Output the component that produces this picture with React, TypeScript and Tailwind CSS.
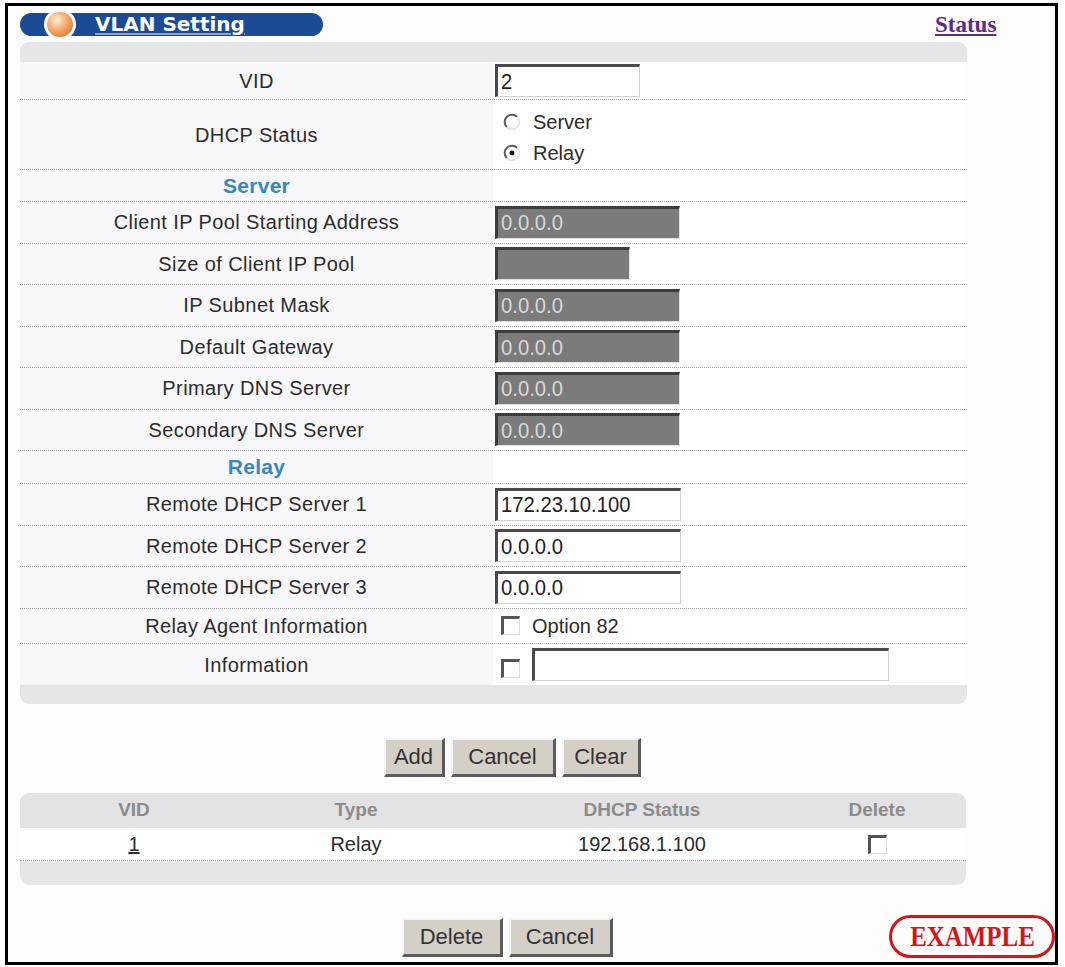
import type { ReactNode } from "react";

// Classic Windows-style form widgets for the VLAN / DHCP setting page

function TextBox({ value, width, disabled }: { value?: string; width: string; disabled?: boolean }) {
  return (
    <div
      className={`${width} h-[33px] flex items-center pl-[3px] overflow-hidden border-t-[3px] border-l-[3px] border-b border-r ${
        disabled
          ? "bg-[#7b7b7b] border-t-[#3c3c3c] border-l-[#3c3c3c] border-b-[#e2e2e2] border-r-[#e2e2e2] text-[#d8d8d8]"
          : "bg-white border-t-[#4a4a4a] border-l-[#4a4a4a] border-b-[#d0d0d0] border-r-[#d0d0d0] text-[#1e1e1e]"
      }`}
    >
      <span className="inline-block origin-left scale-x-[0.92] text-[22px] leading-none whitespace-nowrap">{value}</span>
    </div>
  );
}

function Radio({ checked }: { checked?: boolean }) {
  return (
    <svg width="18" height="18" viewBox="0 0 16 16">
      <circle cx="8" cy="8" r="6.5" fill="#fff" />
      <path d="M3.4 12.6A6.5 6.5 0 0 1 12.6 3.4" fill="none" stroke="#5e5e5e" strokeWidth="1.8" />
      <path d="M12.6 3.4A6.5 6.5 0 0 1 3.4 12.6" fill="none" stroke="#e4e4e4" strokeWidth="1.6" />
      {checked && <circle cx="8" cy="8" r="2.2" fill="#111" />}
    </svg>
  );
}

function CheckBox() {
  return <div className="w-[19px] h-[19px] bg-white border-t-[3px] border-l-[3px] border-t-[#555] border-l-[#555] border-b border-r border-b-[#dcdcdc] border-r-[#dcdcdc]" />;
}

function Button({ children, width }: { children: ReactNode; width: string }) {
  return (
    <button
      type="button"
      className={`${width} h-[39px] bg-[#d4d0c8] text-[22px] text-[#333] leading-none border-t-2 border-l-2 border-t-[#f5f5f5] border-l-[#f5f5f5] border-b-[3px] border-r-[3px] border-b-[#5c5c5c] border-r-[#5c5c5c]`}
    >
      {children}
    </button>
  );
}

function Row({ label, height, children, heading, last }: { label: string; height: string; children?: ReactNode; heading?: boolean; last?: boolean }) {
  return (
    <div className={`flex ${height} ${last ? "" : "border-b border-dotted border-[#a6a6a6]"}`}>
      <div
        className={`w-[473px] bg-[#f8f7f9] flex items-center justify-center ${
          heading ? "text-[21px] font-bold text-[#3589bd] tracking-[0.3px]" : "text-[20px] text-[#2c2c2c] tracking-[0.4px]"
        }`}
      >
        {label}
      </div>
      <div className="flex-1 flex items-center pl-[2px]">{children}</div>
    </div>
  );
}

const serverRows = [
  { label: "Client IP Pool Starting Address", value: "0.0.0.0", width: "w-[185px]" },
  { label: "Size of Client IP Pool", value: "", width: "w-[135px]" },
  { label: "IP Subnet Mask", value: "0.0.0.0", width: "w-[185px]" },
  { label: "Default Gateway", value: "0.0.0.0", width: "w-[185px]" },
  { label: "Primary DNS Server", value: "0.0.0.0", width: "w-[185px]" },
  { label: "Secondary DNS Server", value: "0.0.0.0", width: "w-[185px]" },
];

const relayRows = [
  { label: "Remote DHCP Server 1", value: "172.23.10.100" },
  { label: "Remote DHCP Server 2", value: "0.0.0.0" },
  { label: "Remote DHCP Server 3", value: "0.0.0.0" },
];

export default function App() {
  return (
    <div className="min-h-screen bg-white font-['Liberation_Sans',Arial,sans-serif] pt-[3px] pl-[5px]">
      <div className="relative w-[1053px] h-[962px] border-[3px] border-black bg-[#fefdfe] pl-[12px]">
        {/* title bar */}
        <div className="h-[36px] flex items-center">
          <div className="relative w-[303px] h-[23px] rounded-full bg-[#1c4a94] flex items-center pl-[75px]">
            <div className="absolute left-[24px] top-[-4px] w-[32px] h-[31px] rounded-full border-[3px] border-white bg-[radial-gradient(circle_at_38%_32%,#fff1df_0%,#f7b77a_35%,#e2823a_75%,#c8692a_100%)]" />
            <span className="font-['DejaVu_Sans',sans-serif] text-[20px] font-bold text-white leading-none underline decoration-[#8ea4cf] underline-offset-[2px]">
              VLAN Setting
            </span>
          </div>
          <a href="#" className="ml-[612px] mt-[1px] font-['Liberation_Serif',serif] text-[23px] font-bold text-[#5b2b86] underline leading-none">
            Status
          </a>
        </div>

        {/* setting panel */}
        <div className="w-[947px] rounded-[9px] overflow-hidden bg-white">
          <div className="h-[20px] bg-[#e6e5e8]" />
          <Row label="VID" height="h-[38px]">
            <TextBox value="2" width="w-[145px]" />
          </Row>
          <Row label="DHCP Status" height="h-[70px]">
            <div className="flex flex-col gap-[11px] pl-[8px] mt-[6px] text-[20px] text-[#2c2c2c]">
              <label className="flex items-center gap-[12px] leading-none">
                <Radio />
                Server
              </label>
              <label className="flex items-center gap-[12px] leading-none">
                <Radio checked />
                Relay
              </label>
            </div>
          </Row>
          <Row label="Server" height="h-[32px]" heading />
          {serverRows.map((r) => (
            <Row key={r.label} label={r.label} height="h-[41.5px]">
              <TextBox value={r.value} width={r.width} disabled />
            </Row>
          ))}
          <Row label="Relay" height="h-[33px]" heading />
          {relayRows.map((r) => (
            <Row key={r.label} label={r.label} height="h-[41.5px]">
              <TextBox value={r.value} width="w-[186px]" />
            </Row>
          ))}
          <Row label="Relay Agent Information" height="h-[35.5px]">
            <div className="flex items-center gap-[12px] pl-[6px] text-[20px] text-[#2c2c2c] leading-none">
              <CheckBox />
              Option 82
            </div>
          </Row>
          <Row label="Information" height="h-[41px]" last>
            <div className="flex items-center gap-[12px] pl-[6px]">
              <div className="mt-[7px]">
                <CheckBox />
              </div>
              <TextBox width="w-[357px]" />
            </div>
          </Row>
          <div className="h-[19px] bg-[#e6e5e8]" />
        </div>

        {/* action buttons */}
        <div className="w-[947px] mt-[34px] flex justify-center gap-[6px] pl-[37px]">
          <Button width="w-[61px]">Add</Button>
          <Button width="w-[105px]">Cancel</Button>
          <Button width="w-[79px]">Clear</Button>
        </div>

        {/* configured VLAN table */}
        <div className="w-[946px] mt-[16px] rounded-[9px] overflow-hidden bg-white">
          <div className="h-[35px] bg-[#e3e2e5] grid grid-cols-[228px_216px_356px_114px_1fr] items-center text-[19px] font-bold text-[#8b8b8b]">
            <div className="text-center">VID</div>
            <div className="text-center">Type</div>
            <div className="text-center">DHCP Status</div>
            <div className="text-center">Delete</div>
          </div>
          <div className="h-[33px] grid grid-cols-[228px_216px_356px_114px_1fr] items-center text-[20px] text-[#2c2c2c] border-b border-dotted border-[#a6a6a6]">
            <div className="text-center">
              <a href="#" className="underline text-[#2c2c2c]">1</a>
            </div>
            <div className="text-center">Relay</div>
            <div className="text-center">192.168.1.100</div>
            <div className="flex justify-center">
              <CheckBox />
            </div>
          </div>
          <div className="h-[24px] bg-[#e6e5e8]" />
        </div>

        <div className="w-[947px] mt-[33px] flex justify-center gap-[6px] pl-[27px]">
          <Button width="w-[101px]">Delete</Button>
          <Button width="w-[104px]">Cancel</Button>
        </div>

        {/* example stamp */}
        <div className="absolute left-[881px] top-[909px] w-[166px] h-[43px] rounded-full border-[3px] border-[#d7141a] flex items-center justify-center">
          <span className="inline-block scale-x-[0.86] font-['Liberation_Serif',serif] text-[29px] font-bold text-[#d7141a] leading-none">EXAMPLE</span>
        </div>
      </div>
    </div>
  );
}
